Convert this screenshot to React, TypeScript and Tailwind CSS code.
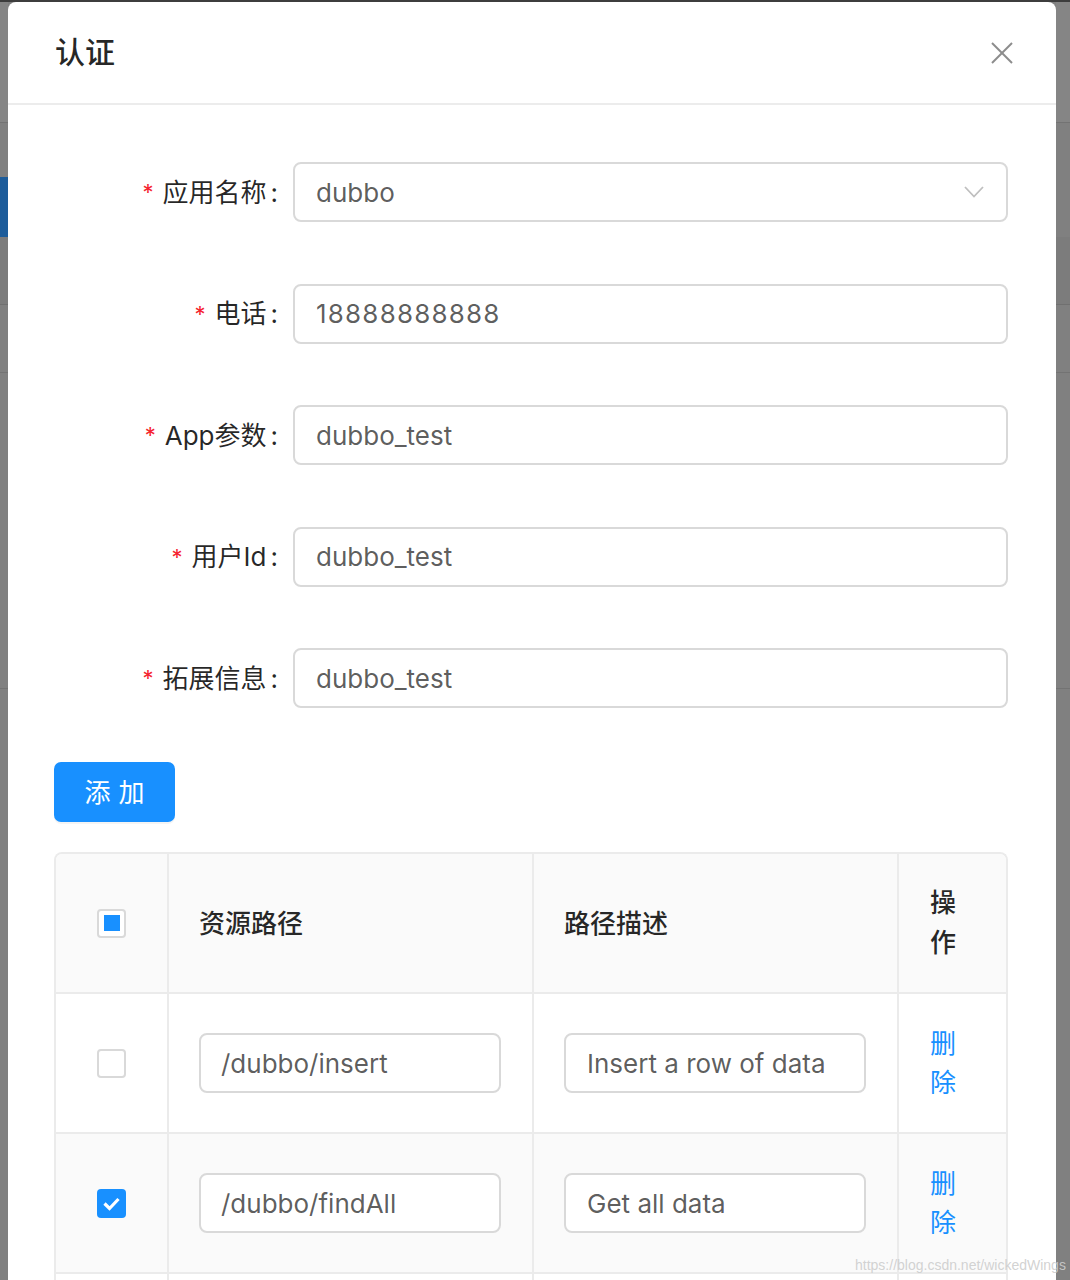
import React from "react";

function BgStrip({ blue }: { blue?: boolean }) {
  return (
    <div className="flex flex-col">
      <div className="h-[120px] bg-[#858585]" />
      <div className="h-[1px] bg-[#737373]" />
      <div className="h-[54px] bg-[#808080]" />
      <div className={blue ? "h-[60px] bg-[#1d5c9a]" : "h-[60px] bg-[#808080]"} />
      <div className="h-[67px] bg-[#7c7c7c]" />
      <div className="h-[1px] bg-[#707070]" />
      <div className="h-[67px] bg-[#808080]" />
      <div className="h-[1px] bg-[#737373]" />
      <div className="h-[315px] bg-[#808080]" />
      <div className="h-[1px] bg-[#737373]" />
    </div>
  );
}

function FormRow({
  label,
  value,
  select,
  last,
  digits,
}: {
  label: string;
  value: string;
  select?: boolean;
  last?: boolean;
  digits?: boolean;
}) {
  return (
    <div className={last ? "flex items-center h-[60px]" : "flex items-center h-[60px] mb-[61.5px]"}>
      <div className="w-[239px] shrink-0 flex justify-end items-center pr-[15px] text-[26px] text-[rgba(0,0,0,0.85)]">
        <span className="text-[#f5222d] text-[22px] mr-[9px] leading-none">*</span>
        <span>{label}</span>
        <span className="ml-[4px]">:</span>
      </div>
      <div className="flex-1 h-[60px] border-2 border-[#d9d9d9] rounded-[8px] pl-[21px] pr-[22px] flex items-center justify-between text-[26px] text-[rgba(0,0,0,0.65)]">
        <span className={digits ? "tracking-[1.2px]" : ""}>{value}</span>
        {select && (
          <svg width="20" height="12" viewBox="0 0 20 12">
            <polyline points="1,1 10,10.5 19,1" fill="none" stroke="#bfbfbf" strokeWidth="1.8" />
          </svg>
        )}
      </div>
    </div>
  );
}

function Checkbox({ state }: { state: "none" | "checked" | "indeterminate" }) {
  if (state === "checked") {
    return (
      <div className="w-[29px] h-[29px] rounded-[4px] bg-[#1890ff] flex items-center justify-center">
        <svg width="29" height="29" viewBox="0 0 29 29">
          <polyline points="7.5,14.5 12.5,19.5 21.5,10" fill="none" stroke="#ffffff" strokeWidth="3.2" />
        </svg>
      </div>
    );
  }
  return (
    <div className="w-[29px] h-[29px] rounded-[4px] border-2 border-[#d9d9d9] bg-white flex items-center justify-center">
      {state === "indeterminate" && <div className="w-[16px] h-[16px] bg-[#1890ff]" />}
    </div>
  );
}

const cell = "border-r-2 border-b-2 border-[#ebebeb] flex items-center";
const lastCell = "border-b-2 border-[#ebebeb] flex items-center";

function DataRow({
  path,
  desc,
  checked,
  grey,
}: {
  path: string;
  desc: string;
  checked: boolean;
  grey?: boolean;
}) {
  const bg = grey ? " bg-[#fafafa]" : " bg-white";
  return (
    <>
      <div className={cell + bg + " h-[140px] justify-center"}>
        <Checkbox state={checked ? "checked" : "none"} />
      </div>
      <div className={cell + bg + " pl-[30px]"}>
        <div className="w-[302px] h-[60px] border-2 border-[#d9d9d9] rounded-[8px] bg-white pl-[20px] flex items-center text-[26px] text-[rgba(0,0,0,0.65)]">
          {path}
        </div>
      </div>
      <div className={cell + bg + " pl-[30px]"}>
        <div className="w-[302px] h-[60px] border-2 border-[#d9d9d9] rounded-[8px] bg-white pl-[21px] flex items-center text-[26px] text-[rgba(0,0,0,0.65)]">
          {desc}
        </div>
      </div>
      <div className={lastCell + bg + " px-[31px] text-[26px] leading-[39px] text-[#1890ff]"}>
        <span>删除</span>
      </div>
    </>
  );
}

export default function App() {
  return (
    <div className="relative h-[1280px] overflow-hidden bg-[#808080] flex flex-col font-['Inter','Noto_Sans_CJK_SC',sans-serif]">
      <div className="h-[2px] bg-[#3d3d3d] shrink-0" />
      <div className="flex flex-1">
        <div className="w-[8px] shrink-0">
          <BgStrip blue />
        </div>
        <div className="w-[1048px] shrink-0 bg-white rounded-t-[8px]">
          <div className="h-[103px] border-b-2 border-[#ececec] flex items-center justify-between pl-[47px] pr-[43px]">
            <span className="text-[30px] font-medium text-[rgba(0,0,0,0.85)]">认证</span>
            <svg width="22" height="22" viewBox="0 0 22 22">
              <line x1="1" y1="1" x2="21" y2="21" stroke="#8c8c8c" strokeWidth="2" />
              <line x1="21" y1="1" x2="1" y2="21" stroke="#8c8c8c" strokeWidth="2" />
            </svg>
          </div>
          <div className="pt-[57px] pl-[46px] pr-[48px]">
            <FormRow label="应用名称" value="dubbo" select />
            <FormRow label="电话" value="18888888888" digits />
            <FormRow label="App参数" value="dubbo_test" />
            <FormRow label="用户Id" value="dubbo_test" />
            <FormRow label="拓展信息" value="dubbo_test" last />
            <div className="mt-[54px] w-[121px] h-[60px] rounded-[7px] bg-[#1890ff] shadow-[0_2px_0_rgba(0,0,0,0.045)] flex items-center justify-center text-white text-[26px]">
              <span className="tracking-[8px] mr-[-8px]">添加</span>
            </div>
            <div className="mt-[30px] border-2 border-b-0 border-[#ebebeb] rounded-t-[8px] overflow-hidden grid grid-cols-[113px_365px_365px_1fr]">
              <div className={cell + " bg-[#fafafa] h-[140px] justify-center"}>
                <Checkbox state="indeterminate" />
              </div>
              <div className={cell + " bg-[#fafafa] pl-[30px] text-[26px] font-medium text-[rgba(0,0,0,0.85)]"}>
                资源路径
              </div>
              <div className={cell + " bg-[#fafafa] pl-[30px] text-[26px] font-medium text-[rgba(0,0,0,0.85)]"}>
                路径描述
              </div>
              <div className={lastCell + " bg-[#fafafa] px-[31px] text-[26px] leading-[40px] font-medium text-[rgba(0,0,0,0.85)]"}>
                <span>操作</span>
              </div>
              <DataRow path="/dubbo/insert" desc="Insert a row of data" checked={false} />
              <DataRow path="/dubbo/findAll" desc="Get all data" checked grey />
              <div className={cell + " bg-white h-[140px]"} />
              <div className={cell + " bg-white"} />
              <div className={cell + " bg-white"} />
              <div className={lastCell + " bg-white"} />
            </div>
          </div>
        </div>
        <div className="flex-1">
          <BgStrip />
        </div>
      </div>
      <div className="absolute left-[855px] top-[1255px] text-[14px] font-['Liberation_Sans',sans-serif] text-[rgba(205,205,205,0.9)]">
        https://blog.csdn.net/wickedWings
      </div>
    </div>
  );
}
